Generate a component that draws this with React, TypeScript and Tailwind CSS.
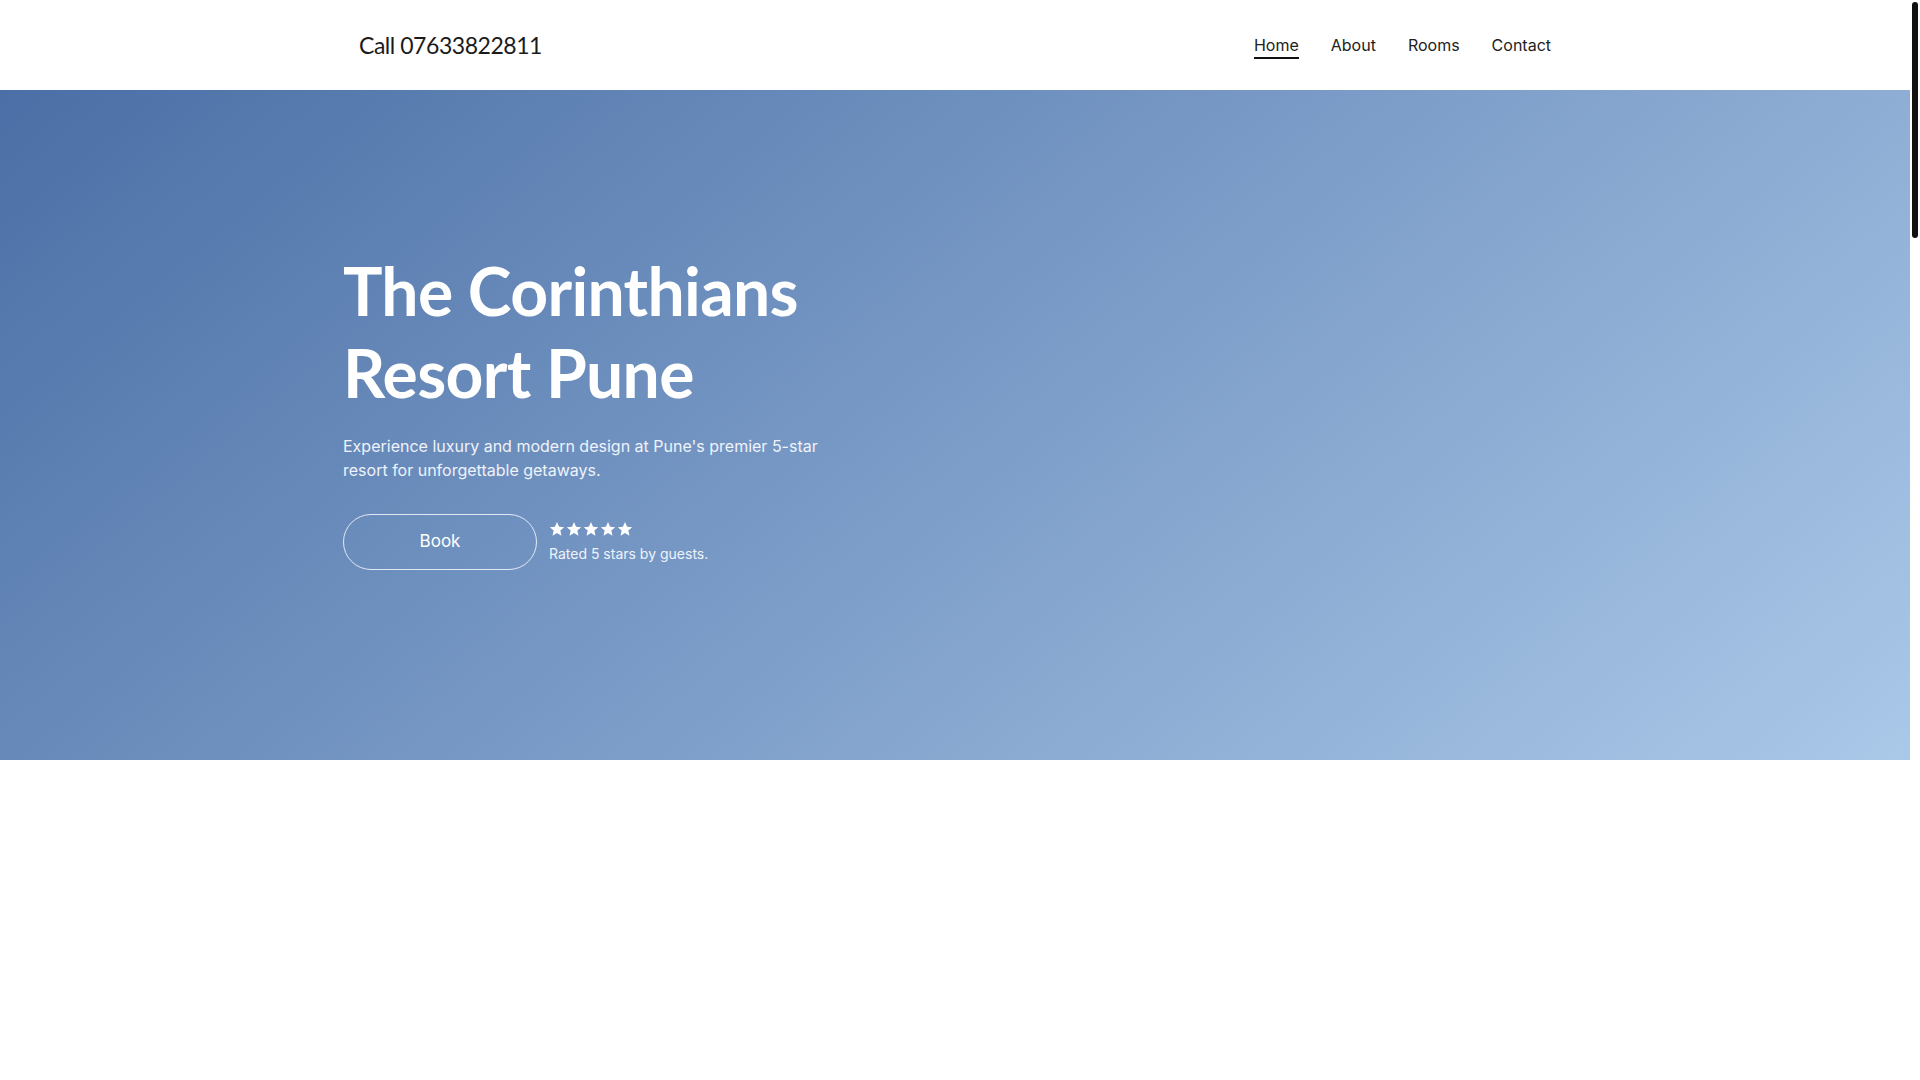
import React from 'react'

const navLinks = ['Home', 'About', 'Rooms', 'Contact']

function StarIcon() {
  return (
    <svg width="16" height="16" viewBox="0 0 24 24" fill="currentColor" aria-hidden="true">
      <polygon points="12,1.5 15.1,8.6 22.8,9.3 17,14.4 18.7,22 12,18 5.3,22 7,14.4 1.2,9.3 8.9,8.6" />
    </svg>
  )
}

function Header() {
  return (
    <header className="h-[90px] bg-white">
      <div className="mx-auto flex h-full w-[1224px] items-center justify-between px-4">
        {/* Phone */}
        <a
          className="text-[23px] tracking-[-0.02em] text-[#1b1b1b]"
          style={{ fontFamily: 'Lato, "Noto Sans", sans-serif' }}
        >
          Call 07633822811
        </a>

        {/* Nav */}
        <nav className="mt-[2px] flex items-center gap-8" style={{ fontFamily: 'Inter, sans-serif' }}>
          {navLinks.map((l, i) => (
            <a
              key={l}
              className={
                i === 0
                  ? 'border-b-2 border-[#111] text-[16px] leading-[24px] text-[#222]'
                  : 'border-b-2 border-transparent text-[16px] leading-[24px] text-[#222]'
              }
            >
              {l}
            </a>
          ))}
        </nav>
      </div>
    </header>
  )
}

function Hero() {
  return (
    <section className="h-[670px] bg-[linear-gradient(140deg,#4b6fa6,#aac8e8)]">
      <div className="mx-auto w-[1224px] pt-[160px]">
        <h1
          className="text-[66px] font-bold leading-[82px] tracking-[-0.01em] text-white"
          style={{ fontFamily: 'Lato, "Noto Sans", sans-serif' }}
        >
          The Corinthians
          <br />
          Resort Pune
        </h1>

        <p
          className="mt-[20px] w-[490px] text-[16px] leading-[24px] text-[#eef3fa]"
          style={{ fontFamily: 'Inter, sans-serif' }}
        >
          Experience luxury and modern design at Pune's premier 5-star resort for unforgettable
          getaways.
        </p>

        <div className="mt-[32px] flex items-center gap-[12px]" style={{ fontFamily: 'Inter, sans-serif' }}>
          <button className="flex h-[56px] w-[194px] items-center justify-center rounded-full border border-white/80 text-[17px] text-white">
            Book
          </button>
          <div className="flex flex-col gap-[7px]">
            <div className="flex gap-[1px] text-white">
              {[0, 1, 2, 3, 4].map((s) => (
                <StarIcon key={s} />
              ))}
            </div>
            <span className="text-[14px] leading-[20px] text-[#eef3fa]">Rated 5 stars by guests.</span>
          </div>
        </div>
      </div>
    </section>
  )
}

export default function App() {
  return (
    <div className="min-h-screen bg-white pr-[10px]">
      <Header />
      <Hero />
      {/* rest of page below the fold */}
      <div className="h-[3900px] bg-white" />
      {/* scrollbar thumb overlay */}
      <div className="fixed right-[2px] top-[2px] h-[236px] w-[6px] rounded-full bg-[#111]" />
    </div>
  )
}
